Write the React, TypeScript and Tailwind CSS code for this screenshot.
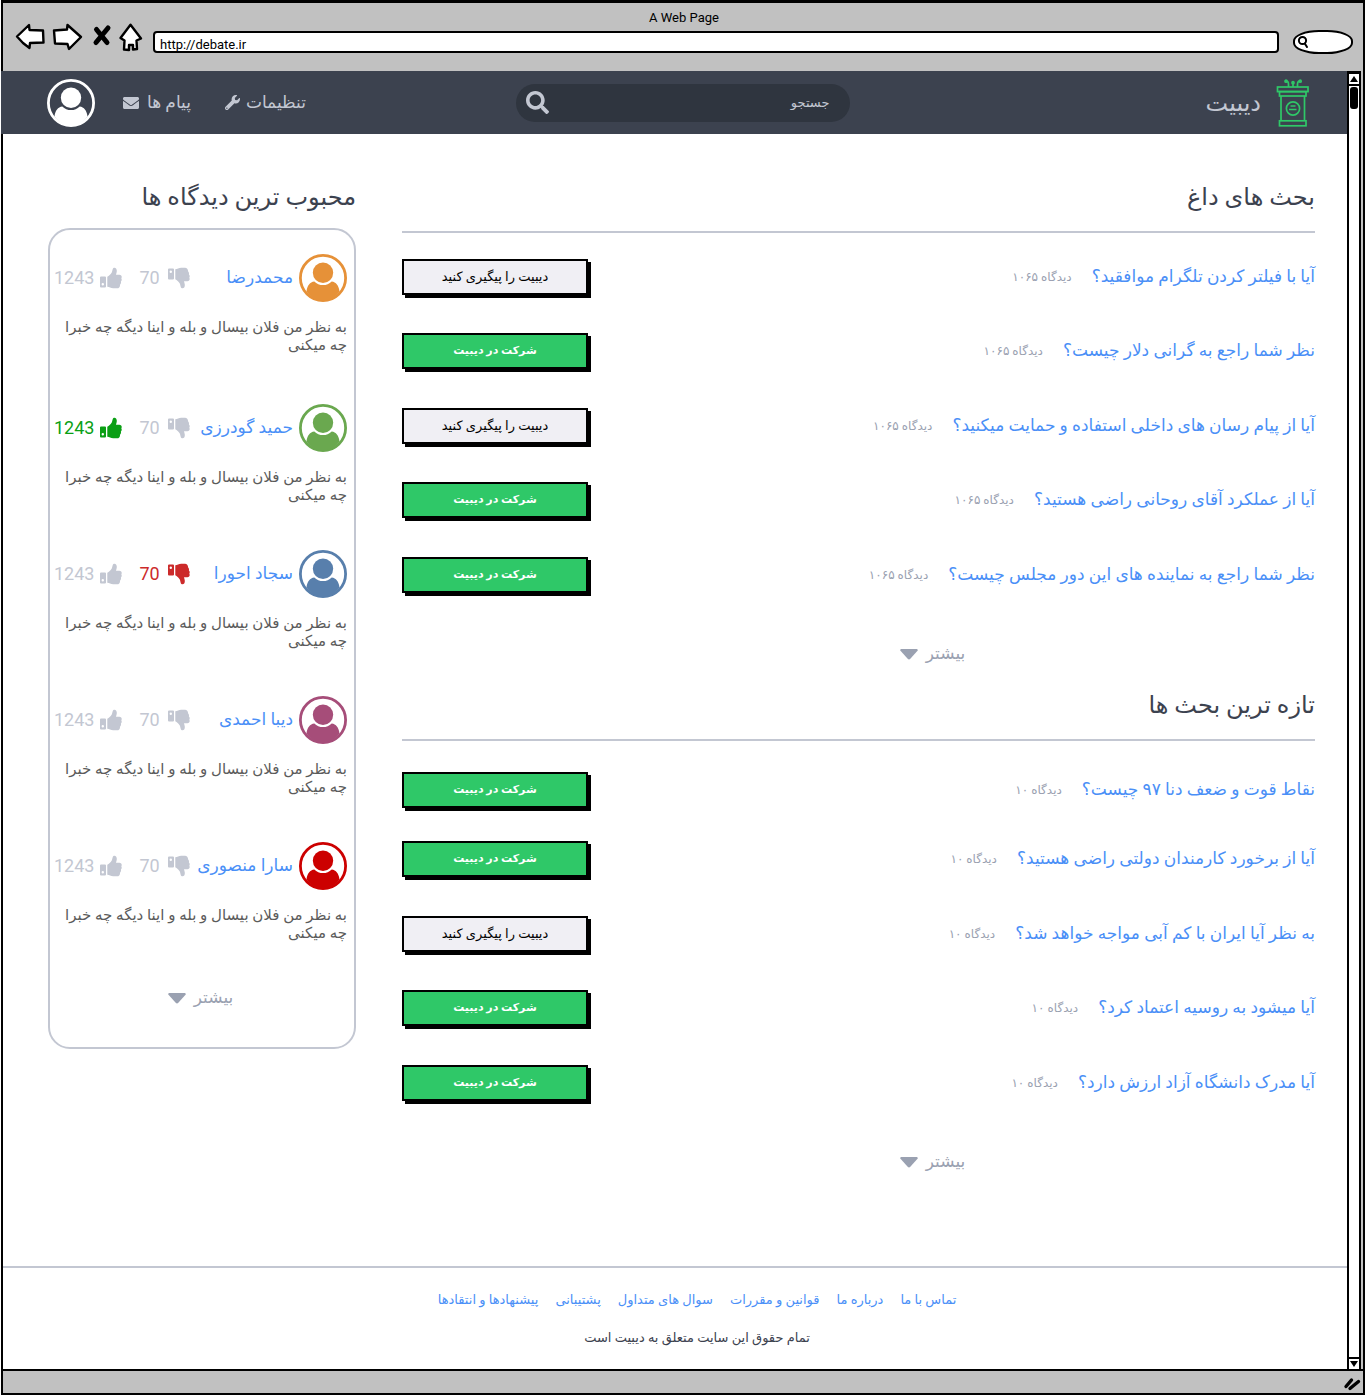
import React from "react";
import { FaEnvelope, FaSearch, FaWrench } from "react-icons/fa";

type Debate = { title: string; count: string; joinable: boolean };
type Comment = { name: string; color: string; vote?: "up" | "down" };

const hotDebates: Debate[] = [
  { title: "آیا با فیلتر کردن تلگرام موافقید؟", count: "۱۰۶۵", joinable: false },
  { title: "نظر شما راجع به گرانی دلار چیست؟", count: "۱۰۶۵", joinable: true },
  { title: "آیا از پیام رسان های داخلی استفاده و حمایت میکنید؟", count: "۱۰۶۵", joinable: false },
  { title: "آیا از عملکرد آقای روحانی راضی هستید؟", count: "۱۰۶۵", joinable: true },
  { title: "نظر شما راجع به نماینده های این دور مجلس چیست؟", count: "۱۰۶۵", joinable: true },
];

const newDebates: Debate[] = [
  { title: "نقاط قوت و ضعف دنا ۹۷ چیست؟", count: "۱۰", joinable: true },
  { title: "آیا از برخورد کارمندان دولتی راضی هستید؟", count: "۱۰", joinable: true },
  { title: "به نظر آیا ایران با کم آبی مواجه خواهد شد؟", count: "۱۰", joinable: false },
  { title: "آیا میشود به روسیه اعتماد کرد؟", count: "۱۰", joinable: true },
  { title: "آیا مدرک دانشگاه آزاد ارزش دارد؟", count: "۱۰", joinable: true },
];

const comments: Comment[] = [
  { name: "محمدرضا", color: "text-[#e69138]" },
  { name: "حمید گودرزی", color: "text-[#6aa84f]", vote: "up" },
  { name: "سجاد احورا", color: "text-[#587fac]", vote: "down" },
  { name: "دیبا احمدی", color: "text-[#a64d79]" },
  { name: "سارا منصوری", color: "text-[#cc0000]" },
];

const footerLinks = ["تماس با ما", "درباره ما", "قوانین و مقررات", "سوال های متداول", "پشتیبانی", "پیشنهادها و انتقادها"];

function Avatar() {
  return (
    <svg viewBox="0 0 48 48" className="size-12 shrink-0" aria-hidden="true">
      <circle cx="24" cy="24" r="22.6" fill="none" stroke="currentColor" strokeWidth="2.8" />
      <circle cx="24" cy="18.7" r="10.2" fill="currentColor" />
      <path d="M7.500 37.500C8.200 31.500 11 28 15.300 27.500A12.300 12.300 0 0 0 32.700 27.500C37 28 39.800 31.500 40.500 37.500C36.500 43 31 46.500 24 46.500C17 46.500 11.500 43 7.500 37.500Z" fill="currentColor" />
    </svg>
  );
}

function Thumb({ down }: { down?: boolean }) {
  return (
    <svg viewBox="0 0 22 22" className="size-[22px] shrink-0" fill="currentColor" aria-hidden="true">
      <g transform={down ? "translate(0 22) scale(1 -1)" : undefined}>
        <path fillRule="evenodd" d="M1 9.500H5Q6 9.500 6 10.500V19.500Q6 20.500 5 20.500H1Q0 20.500 0 19.500V10.500Q0 9.500 1 9.500ZM2.800 16A1.200 1.200 0 1 0 2.800 18.400A1.200 1.200 0 1 0 2.800 16Z" />
        <path d="M7.300 9.800C9 9 10.500 7.500 11.600 5.800C12.600 4.400 12.200 1.300 14 .8C16.300 .5 17.100 2.700 16.700 4.900L16 7.800H19.400C21.400 7.800 22.300 9.800 21.300 11.300C22 12.400 21.800 13.900 20.900 14.600C21.200 15.900 20.900 17 20 17.700C20.200 19.800 19 21.200 17 21.300H13.200C10.800 21.200 9.300 20 7.300 19.800Z" />
      </g>
    </svg>
  );
}

function Podium() {
  return (
    <svg viewBox="0 0 34 48" className="h-12 w-[34px] text-[#2fc868]" fill="none" stroke="currentColor" strokeWidth="1.7" aria-hidden="true">
      <rect x="1.500" y="8" width="30.500" height="4.600" />
      <rect x="3.500" y="12.600" width="26.500" height="4.400" />
      <path d="M5 17v24.500M28.500 17v24.500" />
      <rect x="3.500" y="41.800" width="26.500" height="5" />
      <circle cx="17" cy="29.500" r="6.600" />
      <path d="M14.500 27h5M13 30.500h7.500" />
      <path d="M17 8V4.500M12.500 8V5.500C12.500 3.500 12 2 10 2.200M21.500 8V5.500C21.500 3.500 22 2 24 2.200" />
      <circle cx="17" cy="3.700" r="1" />
      <circle cx="10" cy="2.200" r="1" />
      <circle cx="24.200" cy="2.200" r="1" />
    </svg>
  );
}

function MoreButton() {
  return (
    <button type="button" className="flex h-8 items-center gap-2 text-[17px] text-[#9aa1b1]">
      بیشتر
      <svg viewBox="0 0 18 11" className="h-[11px] w-[18px]" aria-hidden="true">
        <path d="M1.200 0H16.800Q18.600 .6 17.300 2.100L10.300 9.800Q9 11 7.700 9.800L.7 2.100Q-.6 .6 1.200 0Z" fill="currentColor" />
      </svg>
    </button>
  );
}

function DebateSection({ title, debates, tightFirst }: { title: string; debates: Debate[]; tightFirst?: boolean }) {
  return (
    <section>
      <h2 className="h-8 text-2xl leading-8 text-[#3c424f]">{title}</h2>
      <div className="mt-[18px] h-0.5 bg-[#c3c7d2]" />
      <ul className={tightFirst ? "mt-[31px] *:first:h-[69px]" : "mt-[26px]"}>
        {debates.map((d) => (
          <li key={d.title} className="flex h-[74px] items-start justify-between even:h-[75px]">
            <div className="flex h-9 items-center gap-5">
              <a href="#" className="text-[17px] text-[#4a8ff7]">{d.title}</a>
              <span className="text-xs text-[#9aa1b1]">دیدگاه {d.count}</span>
            </div>
            <button
              type="button"
              className={
                d.joinable
                  ? "mr-4 h-9 w-[186px] shrink-0 border-2 border-black bg-[#2fc868] text-[11px] font-bold text-white shadow-[3px_3px_0_#000]"
                  : "mr-4 h-9 w-[186px] shrink-0 border-2 border-black bg-[#f0eff4] text-[13px] text-black shadow-[3px_3px_0_#000]"
              }
            >
              {d.joinable ? "شرکت در دیبیت" : "دیبیت را پیگیری کنید"}
            </button>
          </li>
        ))}
      </ul>
      <div className="mt-[7px] flex justify-center pl-[148px]">
        <MoreButton />
      </div>
    </section>
  );
}

function CommentItem({ name, color, vote }: Comment) {
  return (
    <li className="h-[146px] first:h-[150px] last:h-[140px]">
      <div className="flex items-center text-[17px]">
        <span className={color}>
          <Avatar />
        </span>
        <a href="#" className="mr-1.5 text-[#4a8ff7]">{name}</a>
        <button type="button" aria-label="مخالف" className={`mr-auto flex items-center gap-2 text-lg ${vote === "down" ? "text-[#cc2a2a]" : "text-[#c3c7d2]"}`}>
          <Thumb down />
          70
        </button>
        <button type="button" aria-label="موافق" className={`mr-[17px] flex items-center gap-1.5 text-lg ${vote === "up" ? "text-[#0a9f14]" : "text-[#c3c7d2]"}`}>
          <Thumb />
          1243
        </button>
      </div>
      <p className="mt-4 text-[15px] leading-[18px] text-[#5b5b5b]">
        به نظر من فلان بیسال و بله و اینا دیگه چه خبرا
        <br />
        چه میکنی
      </p>
    </li>
  );
}

function BrowserBar() {
  return (
    <div className="h-[71px] border-x-2 border-t-[3px] border-black bg-[#c1c1c1] pl-3 pr-2.5 text-black" dir="ltr">
      <div className="pt-[7px] text-center text-[13px] leading-4">A Web Page</div>
      <div className="mt-[-3px] flex items-center">
        <svg viewBox="0 0 130 32" className="h-8 w-[130px] shrink-0" fill="#fff" stroke="#000" strokeWidth="2.400" strokeLinejoin="round" aria-hidden="true">
          <path d="M2 13.500L14 2L14.500 7L28 7.500L28.500 19.500L15 20L14.500 25L8 20Z" />
          <path d="M39 7.500L52 6.500L52.500 2L66 14L54 26L52.500 21L40 20.500Z" />
          <path d="M81.500 6.500L92 19.500M93 5L81 19.500" strokeWidth="5" strokeLinecap="round" />
          <path d="M115.500 1.800L126 15.500L121.500 17.500L122 26L118 26.500V22H114V27L109 26.500L109.500 17.500L105.500 15Z" />
        </svg>
        <input
          type="text"
          aria-label="Address"
          defaultValue="http://debate.ir"
          className="ml-2 mt-1.5 h-[22px] min-w-0 flex-1 rounded-sm border-2 border-black bg-white px-[5px] pt-1 text-[13px] leading-4"
        />
        <label className="ml-3.5 mt-1.5 flex h-6 w-[60px] items-center rounded-[26px/11px] border-2 border-black bg-white pl-0.5">
          <svg viewBox="0 0 12 14" className="h-3.5 w-3 shrink-0" fill="none" stroke="#000" strokeWidth="2" strokeLinecap="round" aria-hidden="true">
            <circle cx="5.500" cy="5.500" r="3.600" />
            <path d="M7.800 8.500L10 12" />
          </svg>
          <input type="text" aria-label="Web search" className="w-8 bg-transparent outline-none" />
        </label>
      </div>
    </div>
  );
}

function ScrollBar() {
  return (
    <div className="flex w-[18px] shrink-0 flex-col border-r-2 border-black bg-[#c1c1c1] pr-0.5" dir="ltr" aria-hidden="true">
      <div className="flex flex-1 flex-col border-x-2 border-t-[3px] border-black bg-white">
        <div className="flex h-3 items-center justify-center border-b-2 border-black">
          <svg viewBox="0 0 8 6" className="h-1.5 w-2"><path d="M4 0L8 6H0Z" /></svg>
        </div>
        <div className="mx-auto mt-px h-[22px] w-2 rounded-[3px] bg-black" />
        <div className="mt-auto flex h-3 items-center justify-center border-t-2 border-black">
          <svg viewBox="0 0 8 6" className="h-1.5 w-2"><path d="M0 0H8L4 6Z" /></svg>
        </div>
      </div>
    </div>
  );
}

export default function App() {
  return (
    <div className="flex min-h-screen flex-col bg-white pb-0.5 pl-px pr-px font-['Roboto','DejaVu_Sans',sans-serif]">
      <BrowserBar />
      <div className="flex flex-1" dir="ltr">
        <div className="flex min-w-0 flex-1 flex-col" dir="rtl">
          <header className="flex h-[63px] items-center justify-between bg-[#3c424f] pl-[46px] pr-[37px] text-[#c3c7d2]">
            <a href="#" className="flex flex-1 items-center gap-[15px] text-2xl">
              <Podium />
              دیبیت
            </a>
            <label className="ml-2 flex h-[38px] w-[334px] items-center rounded-full bg-[#2f353f] pl-2.5 pr-5">
              <input type="search" aria-label="جستجو" placeholder="جستجو" className="min-w-0 flex-1 bg-transparent text-[13px] outline-none placeholder:text-[#c3c7d2]" />
              <FaSearch className="size-[23px]" />
            </label>
            <nav className="flex flex-1 items-center justify-end text-[17px]">
              <a href="#" className="flex items-center gap-1.5">
                تنظیمات
                <FaWrench className="size-[15px]" />
              </a>
              <a href="#" className="mr-[34px] flex items-center gap-2">
                پیام ها
                <FaEnvelope className="size-4" />
              </a>
              <a href="#" aria-label="حساب کاربری" className="mr-7 text-white">
                <Avatar />
              </a>
            </nav>
          </header>

          <div className="flex flex-1 flex-col border-l-2 border-black">
            <main className="flex items-start gap-[46px] pl-[45px] pr-8 pt-[47px]">
              <div className="flex min-w-0 flex-1 flex-col gap-[19px]">
                <DebateSection title="بحث های داغ" debates={hotDebates} />
                <DebateSection title="تازه ترین بحث ها" debates={newDebates} tightFirst />
              </div>
              <aside className="w-[308px] shrink-0">
                <h2 className="h-8 text-2xl leading-8 text-[#3c424f]">محبوب ترین دیدگاه ها</h2>
                <div className="mt-[15px] rounded-[22px] border-2 border-[#c3c7d2] pb-[33px] pl-1 pr-[7px] pt-6">
                  <ul>
                    {comments.map((c) => (
                      <CommentItem key={c.name} {...c} />
                    ))}
                  </ul>
                  <div className="flex justify-center">
                    <MoreButton />
                  </div>
                </div>
              </aside>
            </main>
            <footer className="mt-auto h-[103px] border-t-2 border-[#c3c7d2] pl-11 pt-[22px] text-center text-[13px] leading-5">
              <nav className="flex justify-center gap-[17px] text-[#4a8ff7]">
                {footerLinks.map((l) => (
                  <a key={l} href="#">{l}</a>
                ))}
              </nav>
              <p className="mt-[18px] text-[#3c424f]">تمام حقوق این سایت متعلق به دیبیت است</p>
            </footer>
          </div>
        </div>
        <ScrollBar />
      </div>
      <div className="flex h-[26px] items-center justify-end border-2 border-black bg-[#c1c1c1] pr-0.5" dir="ltr">
        <svg viewBox="0 0 18 14" className="mt-1 h-3.5 w-[18px]" stroke="#000" strokeWidth="3.400" strokeLinecap="round" aria-hidden="true">
          <path d="M3 9.500L8.500 3M7 11.500L15.500 4.500" />
        </svg>
      </div>
    </div>
  );
}
